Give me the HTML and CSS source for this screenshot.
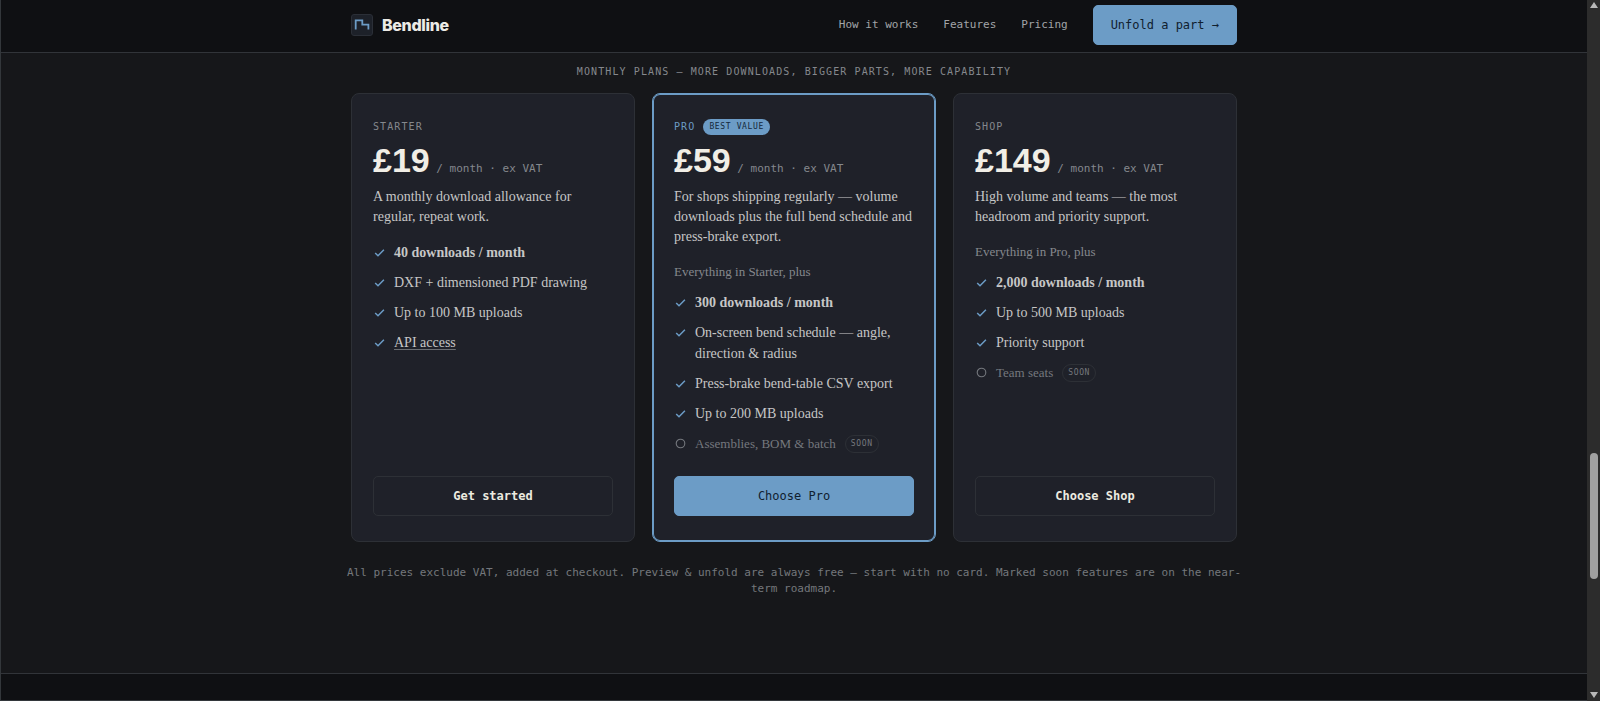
FILE: index.html
```html
<!DOCTYPE html>
<html lang="en">
  <head>
    <meta charset="UTF-8">
    <meta name="viewport" content="width=device-width, initial-scale=1">
    <title>Bendline</title>
    <link rel="stylesheet" href="styles.css">
  </head>
  <body>
    <svg class="sprite" aria-hidden="true">
      <symbol id="check" viewBox="0 0 11 11">
        <path d="M1.2 6 4 8.7 9.9 2.7" fill="none" stroke="currentColor" stroke-width="1.5" />
      </symbol>
      <symbol id="circle" viewBox="0 0 11 11">
        <circle cx="5.5" cy="5.5" r="4.3" fill="none" stroke="currentColor" stroke-width="1.1" />
      </symbol>
    </svg>

    <div class="page">
      <header class="top">
        <div class="wrap nav">
          <a class="brand" href="#">
            <svg class="logo" viewBox="0 0 22 22" aria-hidden="true">
              <rect x=".5" y=".5" width="21" height="21" rx="2.5" fill="#1d2129" stroke="#2b2f37" />
              <path d="M4.7 15.6V6.4h6.6v4.2h6.1v4.8" fill="none" stroke="#6c9cc6" stroke-width="1.8" />
            </svg>
            Bendline
          </a>
          <nav class="links">
            <a href="#how">How it works</a>
            <a href="#features">Features</a>
            <a href="#pricing">Pricing</a>
            <a class="button primary" href="#unfold">Unfold a part →</a>
          </nav>
        </div>
      </header>

      <main class="wrap pricing" id="pricing">
        <h2 class="label">Monthly plans — more downloads, bigger parts, more capability</h2>

        <div class="plans">
          <section class="plan">
            <h3 class="label">Starter</h3>
            <p class="price"><strong>£19</strong> / month · ex VAT</p>
            <p class="desc">A monthly download allowance for regular, repeat work.</p>
            <ul>
              <li><svg><use href="#check" /></svg><b>40 downloads / month</b></li>
              <li><svg><use href="#check" /></svg><span>DXF + dimensioned PDF drawing</span></li>
              <li><svg><use href="#check" /></svg><span>Up to 100 MB uploads</span></li>
              <li><svg><use href="#check" /></svg><a href="#api">API access</a></li>
            </ul>
            <button class="button" type="button">Get started</button>
          </section>

          <section class="plan featured">
            <h3 class="label">Pro <span class="best">Best value</span></h3>
            <p class="price"><strong>£59</strong> / month · ex VAT</p>
            <p class="desc">For shops shipping regularly — volume downloads plus the full bend schedule and press-brake export.</p>
            <p class="plus">Everything in Starter, plus</p>
            <ul>
              <li><svg><use href="#check" /></svg><b>300 downloads / month</b></li>
              <li><svg><use href="#check" /></svg><span>On-screen bend schedule — angle, direction &amp; radius</span></li>
              <li><svg><use href="#check" /></svg><span>Press-brake bend-table CSV export</span></li>
              <li><svg><use href="#check" /></svg><span>Up to 200 MB uploads</span></li>
              <li class="later"><svg><use href="#circle" /></svg><span>Assemblies, BOM &amp; batch</span><span class="soon">SOON</span></li>
            </ul>
            <button class="button primary" type="button">Choose Pro</button>
          </section>

          <section class="plan">
            <h3 class="label">Shop</h3>
            <p class="price"><strong>£149</strong> / month · ex VAT</p>
            <p class="desc">High volume and teams — the most headroom and priority support.</p>
            <p class="plus">Everything in Pro, plus</p>
            <ul>
              <li><svg><use href="#check" /></svg><b>2,000 downloads / month</b></li>
              <li><svg><use href="#check" /></svg><span>Up to 500 MB uploads</span></li>
              <li><svg><use href="#check" /></svg><span>Priority support</span></li>
              <li class="later"><svg><use href="#circle" /></svg><span>Team seats</span><span class="soon">SOON</span></li>
            </ul>
            <button class="button" type="button">Choose Shop</button>
          </section>
        </div>
      </main>

      <p class="note">All prices exclude VAT, added at checkout. Preview &amp; unfold are always free — start with no card. Marked soon features are on the near-term roadmap.</p>

      <footer class="bottom"></footer>
    </div>

    <div class="scrollbar" aria-hidden="true">
      <span class="arrow"></span>
      <div class="track"><span class="thumb"></span></div>
      <span class="arrow down"></span>
    </div>
  </body>
</html>
```

FILE: styles.css
```css
:root {
  --bg: #16171a;
  --dark: #0f1013;
  --card: #1f2129;
  --line: #2d3036;
  --blue: #6c9cc6;
  --text: #c6c6c6;
  --muted: #85888d;
  --mono: "DejaVu Sans Mono", monospace;
  --serif: "Liberation Serif", serif;
}

*,
*:before,
*:after {
  box-sizing: border-box;
}

body {
  background: var(--bg);
  border-left: 1px solid #33373b;
  color: var(--text);
  display: flex;
  font-family: var(--serif);
  font-size: 14px;
  line-height: 20px;
  margin: 0;
  min-height: 100vh;
}

h2,
h3,
p,
ul {
  margin: 0;
  padding: 0;
}

a {
  color: inherit;
  text-decoration: none;
}

.sprite {
  display: none;
}

.page {
  display: flex;
  flex: 1;
  flex-direction: column;
}

.wrap {
  margin: 0 auto;
  max-width: 886px;
  width: 100%;
}

.top {
  background: var(--dark);
  border-bottom: 1px solid #313439;
  padding: 5px 0 7px;
}

.nav,
.brand,
.links {
  align-items: center;
  display: flex;
}

.nav {
  justify-content: space-between;
}

.brand {
  color: #ecebe6;
  font-family: Inter, sans-serif;
  font-size: 16px;
  font-weight: 800;
  gap: 9px;
  letter-spacing: -0.02em;
}

.logo {
  height: 22px;
  width: 22px;
}

.links {
  color: #a2a5a8;
  font-family: var(--mono);
  font-size: 11px;
  gap: 25px;
}

.button {
  background: none;
  border: 1px solid var(--line);
  border-radius: 5px;
  color: #ecebe0;
  display: block;
  font-family: var(--mono);
  font-size: 12px;
  font-weight: bold;
  line-height: 18px;
  padding: 10px 17px;
  text-align: center;
}

.button.primary {
  background: var(--blue);
  border-color: var(--blue);
  color: #10202f;
  font-weight: normal;
}

.label {
  color: var(--muted);
  font-family: var(--mono);
  font-size: 10px;
  font-weight: normal;
  letter-spacing: 0.11em;
  line-height: 16px;
  text-transform: uppercase;
}

.pricing {
  padding-top: 11px;
}

.pricing > .label {
  margin-bottom: 13px;
  text-align: center;
}

.plans {
  display: grid;
  gap: 17px;
  grid-template-columns: repeat(3, 1fr);
}

.plan {
  background: var(--card);
  border: 1px solid var(--line);
  border-radius: 8px;
  display: flex;
  flex-direction: column;
  padding: 25px 21px;
}

.plan .label {
  align-items: center;
  display: flex;
  gap: 8px;
}

.featured {
  border-color: var(--blue);
  box-shadow: inset 0 0 0 1px var(--blue);
}

.featured .label {
  color: var(--blue);
}

.best {
  background: var(--blue);
  border-radius: 8px;
  color: #14283b;
  font-size: 8px;
  letter-spacing: 0.08em;
  padding: 0 6px;
}

.price {
  color: var(--muted);
  font-family: var(--mono);
  font-size: 11px;
  line-height: 32px;
  margin: 9px 0 2px;
}

.price strong {
  color: #f1eee6;
  font-family: "Liberation Sans", sans-serif;
  font-size: 34px;
}

.plus {
  color: var(--muted);
  font-size: 13px;
  margin: 15px 0 -5px;
}

.plan ul {
  display: grid;
  gap: 9px;
  line-height: 21px;
  list-style: none;
  margin: 15px 0 22px;
}

.plan li {
  align-items: flex-start;
  display: flex;
  gap: 9px;
}

.plan li svg {
  color: var(--blue);
  flex: none;
  height: 11px;
  margin: 5px 0 0 1px;
  width: 11px;
}

.plan li a {
  text-decoration: underline;
  text-decoration-color: #6b6e73;
  text-underline-offset: 2px;
}

.plan .later {
  font-size: 13px;
}

.plan .later,
.plan .later svg {
  color: #75787e;
}

.soon {
  border: 1px solid var(--line);
  border-radius: 9px;
  font-family: var(--mono);
  font-size: 8px;
  letter-spacing: 0.08em;
  line-height: 16px;
  margin-top: 2px;
  padding: 0 5px;
}

.plan .button {
  margin-top: auto;
}

.note {
  color: #74777c;
  font-family: var(--mono);
  font-size: 11px;
  line-height: 16px;
  margin: 23px auto 76px;
  max-width: 896px;
  text-align: center;
}

.bottom {
  background: var(--dark);
  border-bottom: 1px solid #33373b;
  border-top: 1px solid #313439;
  flex: 1;
}

.scrollbar {
  align-items: center;
  background: #2c2c2c;
  display: flex;
  flex-direction: column;
  gap: 2px;
  padding: 2px 0 3px;
  width: 13px;
}

.arrow {
  border: 4px solid transparent;
  border-bottom: 6px solid #b9b9b9;
  border-top: 0;
}

.arrow.down {
  transform: rotate(180deg);
}

.track {
  display: flex;
  flex: 1;
  flex-direction: column;
  width: 8px;
}

.track:before {
  content: "";
  flex: 443;
}

.thumb {
  background: #a0a0a0;
  border-radius: 4px;
  flex: 126;
}

.track:after {
  content: "";
  flex: 111;
}
```
